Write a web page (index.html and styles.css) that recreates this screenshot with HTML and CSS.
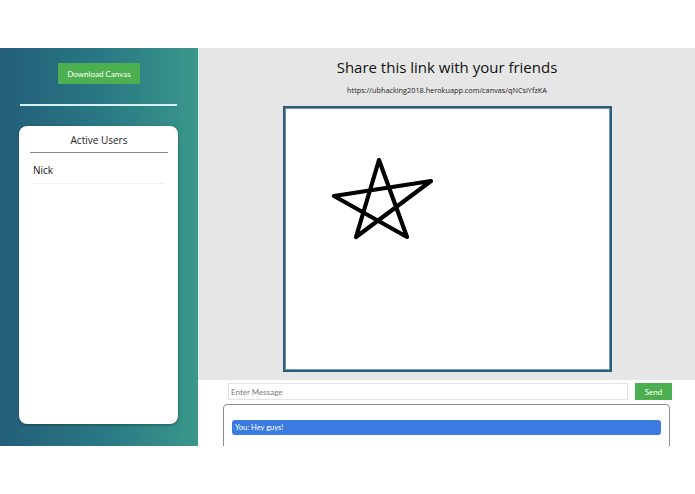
FILE: index.html
```html
<!DOCTYPE html>
<html lang="en">
<head>
<meta charset="utf-8">
<title>Shared Canvas</title>
<link rel="stylesheet" href="styles.css">
</head>
<body>
<div class="app">
  <aside class="sidebar">
    <button class="btn-download">Download Canvas</button>
    <div class="divider"></div>
    <div class="users-panel">
      <div class="users-title">Active Users</div>
      <div class="users-rule"></div>
      <ul class="users-list">
        <li class="user">Nick</li>
      </ul>
    </div>
  </aside>
  <main class="main">
    <section class="share">
      <h1 class="share-title">Share this link with your friends</h1>
      <p class="share-link">https://ubhacking2018.herokuapp.com/canvas/qNCsiYfzKA</p>
      <div class="canvas">
        <svg class="drawing" width="323" height="260" viewBox="0 0 323 260">
          <path d="M70 128 L93 51 L121 128 L48 87 L145 72 Z" fill="none" stroke="#000" stroke-width="4.2" stroke-linejoin="round" stroke-linecap="round"/>
        </svg>
      </div>
    </section>
    <section class="chat">
      <div class="chat-input-row">
        <input class="chat-input" type="text" placeholder="Enter Message">
        <button class="btn-send">Send</button>
      </div>
      <div class="chat-box">
        <div class="message">You: Hey guys!</div>
      </div>
    </section>
  </main>
</div>
</body>
</html>
```
FILE: styles.css
```css
* { box-sizing: border-box; }
html, body { margin: 0; padding: 0; background: #fff; }
body { font-family: "Lato", "Open Sans", sans-serif; }

.app {
  margin-top: 48px;
  height: 398px;
  display: flex;
  overflow: hidden;
}

.sidebar {
  width: 198px;
  flex: none;
  background: linear-gradient(to right, #235e79 0%, #2a7a84 55%, #3a978a 100%);
  display: flex;
  flex-direction: column;
  padding-top: 15px;
}

.btn-download {
  align-self: flex-start;
  margin-left: 58px;
  width: 82px;
  height: 21px;
  border: none;
  background: #4caf50;
  color: #fff;
  font-family: "Lato", sans-serif;
  font-size: 8px;
  padding: 0;
}

.divider {
  margin: 20px 0 0 20px;
  width: 157px;
  height: 2px;
  background: #d6f1f2;
}

.users-panel {
  margin: 20px 0 0 19px;
  width: 159px;
  height: 298px;
  background: #fff;
  border-radius: 8px;
  box-shadow: 0 1px 3px rgba(0,0,0,0.35);
  padding: 8px 10px 0 11px;
}

.users-title {
  font-family: "Open Sans", sans-serif;
  font-size: 10px;
  text-align: center;
  color: #222;
  line-height: 12px;
}

.users-rule {
  margin-top: 6px;
  height: 1px;
  background: #8a8a8a;
}

.users-list {
  list-style: none;
  margin: 0;
  padding: 0 4px 0 3px;
}

.user {
  font-family: "Open Sans", sans-serif;
  font-size: 10px;
  color: #111;
  padding: 11px 0 6px 0;
  border-bottom: 1px solid #eee;
  line-height: 13px;
}

.main {
  flex: 1;
  display: flex;
  flex-direction: column;
}

.share {
  flex: none;
  height: 332px;
  background: #e6e6e6;
  border-left: 1px solid #d5ecee;
  display: flex;
  flex-direction: column;
  align-items: center;
}

.share-title {
  margin: 9px 0 0;
  font-family: "Open Sans", sans-serif;
  font-weight: 400;
  font-size: 15px;
  line-height: 20px;
  color: #111;
}

.share-link {
  margin: 8px 0 0;
  font-family: "Open Sans", sans-serif;
  font-size: 7.3px;
  line-height: 10px;
  color: #222;
}

.canvas {
  margin-top: 11px;
  width: 329px;
  height: 266px;
  background: #fff;
  border: 2px solid #2c5f74;
  box-shadow: inset 0 0 0 1px #6b95a8;
  padding: 1px;
}

.drawing { display: block; }

.chat {
  flex: 1;
  min-height: 0;
  background: #fff;
  padding-top: 3px;
}

.chat-input-row {
  display: flex;
  gap: 7px;
  padding-left: 30px;
}

.chat-input {
  width: 400px;
  height: 17px;
  border: 1px solid #e2e2e2;
  font-family: "Lato", sans-serif;
  font-size: 8px;
  padding: 0 2px;
  color: #333;
  outline: none;
}

.chat-input::placeholder { color: #7a7a7a; }

.btn-send {
  width: 37px;
  height: 17px;
  border: none;
  background: #4caf50;
  color: #fff;
  font-family: "Lato", sans-serif;
  font-size: 8px;
  padding: 0;
}

.chat-box {
  margin: 4px 0 0 25px;
  width: 447px;
  height: 70px;
  border: 1px solid #8c8c8c;
  border-radius: 4px;
  padding: 15px 8px 0;
}

.message {
  height: 15px;
  background: #3b7be0;
  border-radius: 3px;
  color: #fff;
  font-family: "Lato", sans-serif;
  font-size: 7.5px;
  line-height: 15px;
  padding-left: 3px;
}
```
